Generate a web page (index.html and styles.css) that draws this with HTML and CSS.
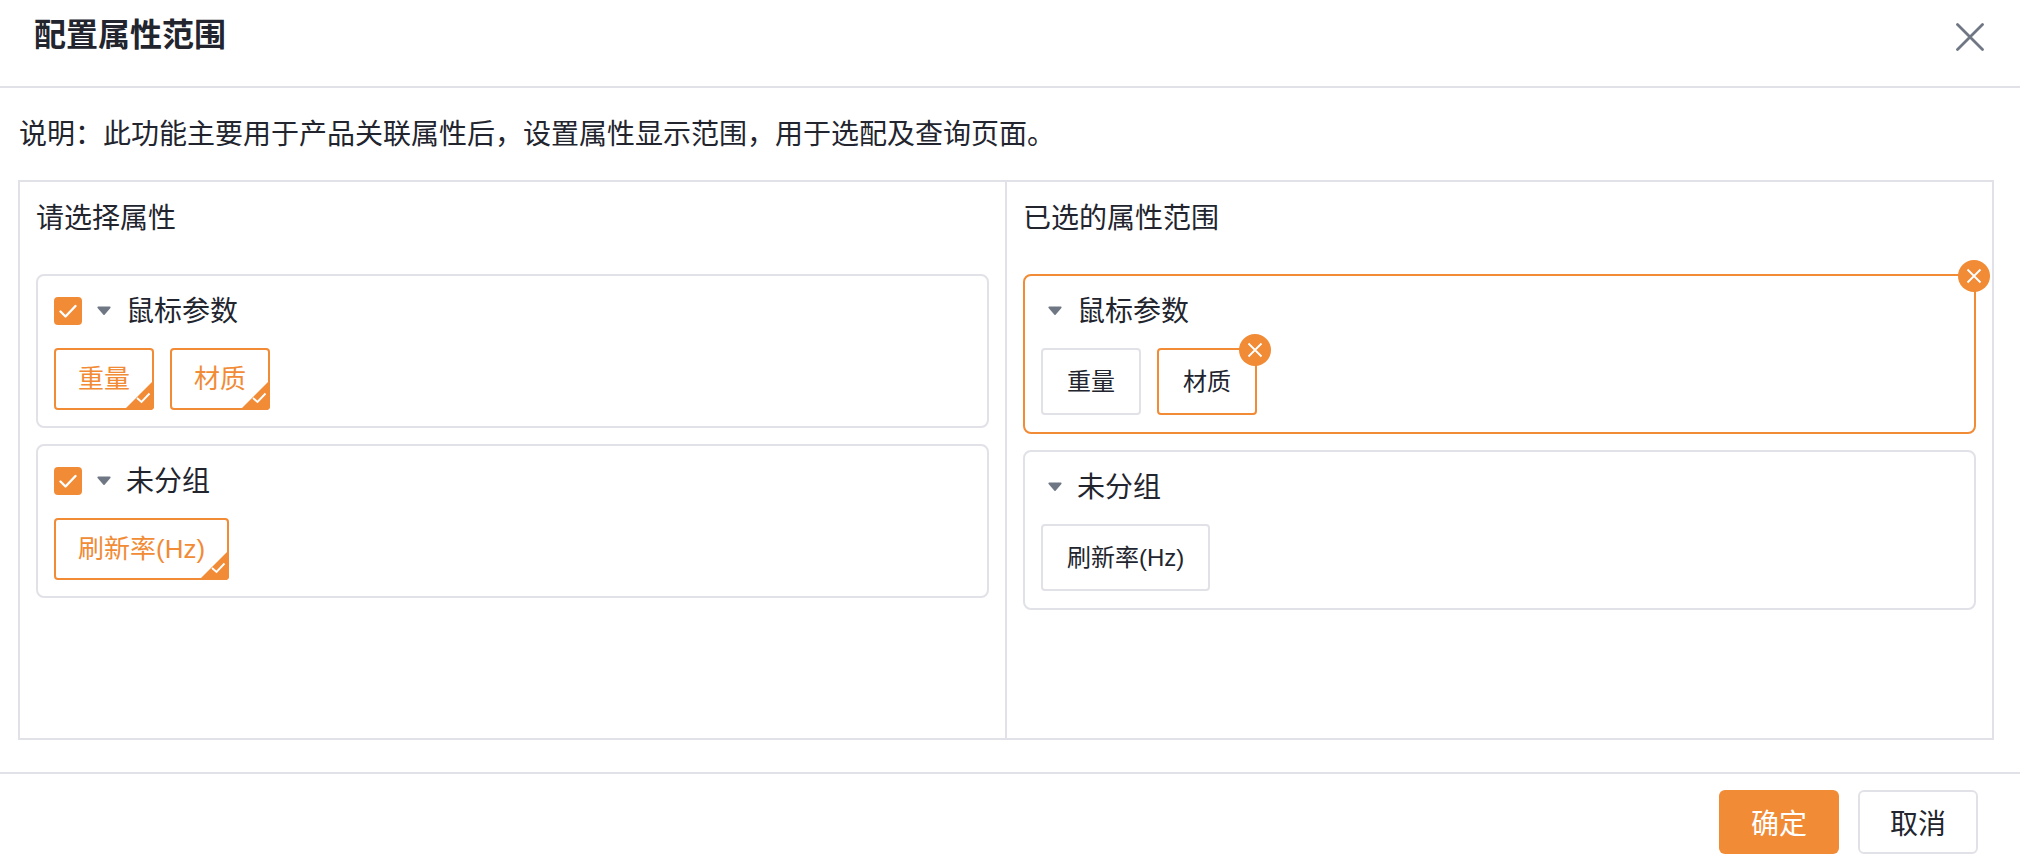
FILE: index.html
```html
<!DOCTYPE html>
<html lang="zh-CN">
<head>
<meta charset="utf-8">
<title>配置属性范围</title>
<link rel="stylesheet" href="styles.css">
</head>
<body>
<div class="dialog">
  <header class="dialog-header">
    <h1 class="dialog-title">配置属性范围</h1>
    <button class="dialog-close" type="button" aria-label="关闭">
      <svg width="28" height="28" viewBox="0 0 28 28"><path d="M1.5 1.5 26.5 26.5M26.5 1.5 1.5 26.5" fill="none" stroke="#6f7784" stroke-width="2.8" stroke-linecap="round"/></svg>
    </button>
  </header>
  <main class="dialog-body">
    <p class="note">说明：此功能主要用于产品关联属性后，设置属性显示范围，用于选配及查询页面。</p>
    <div class="picker">
      <section class="pane pane-left">
        <h2 class="pane-title">请选择属性</h2>
        <div class="group">
          <div class="group-head">
            <span class="checkbox"><svg width="28" height="28" viewBox="0 0 28 28"><path d="M6.5 14.5 11.5 19.5 21.5 9" fill="none" stroke="#fff" stroke-width="2.4" stroke-linecap="round" stroke-linejoin="round"/></svg></span>
            <svg class="caret" width="14" height="10" viewBox="0 0 14 10"><path d="M1.2 1.4H12.8L7 8.2Z" fill="#6f7784" stroke="#6f7784" stroke-width="1.6" stroke-linejoin="round"/></svg>
            <span class="group-name">鼠标参数</span>
          </div>
          <div class="tags">
            <span class="tag tag-on">重量<svg class="corner" width="30" height="30" viewBox="0 0 30 30"><path d="M30 0V26a4 4 0 0 1-4 4H0Z" fill="#f18b36"/><path d="M13 18 17.5 22 25.5 13.5" fill="none" stroke="#fff" stroke-width="1.9"/></svg></span>
            <span class="tag tag-on">材质<svg class="corner" width="30" height="30" viewBox="0 0 30 30"><path d="M30 0V26a4 4 0 0 1-4 4H0Z" fill="#f18b36"/><path d="M13 18 17.5 22 25.5 13.5" fill="none" stroke="#fff" stroke-width="1.9"/></svg></span>
          </div>
        </div>
        <div class="group">
          <div class="group-head">
            <span class="checkbox"><svg width="28" height="28" viewBox="0 0 28 28"><path d="M6.5 14.5 11.5 19.5 21.5 9" fill="none" stroke="#fff" stroke-width="2.4" stroke-linecap="round" stroke-linejoin="round"/></svg></span>
            <svg class="caret" width="14" height="10" viewBox="0 0 14 10"><path d="M1.2 1.4H12.8L7 8.2Z" fill="#6f7784" stroke="#6f7784" stroke-width="1.6" stroke-linejoin="round"/></svg>
            <span class="group-name">未分组</span>
          </div>
          <div class="tags">
            <span class="tag tag-on">刷新率(Hz)<svg class="corner" width="30" height="30" viewBox="0 0 30 30"><path d="M30 0V26a4 4 0 0 1-4 4H0Z" fill="#f18b36"/><path d="M13 18 17.5 22 25.5 13.5" fill="none" stroke="#fff" stroke-width="1.9"/></svg></span>
          </div>
        </div>
      </section>
      <section class="pane pane-right">
        <h2 class="pane-title">已选的属性范围</h2>
        <div class="group group-sel group-active">
          <div class="group-head">
            <svg class="caret" width="14" height="10" viewBox="0 0 14 10"><path d="M1.2 1.4H12.8L7 8.2Z" fill="#6f7784" stroke="#6f7784" stroke-width="1.6" stroke-linejoin="round"/></svg>
            <span class="group-name">鼠标参数</span>
          </div>
          <div class="tags">
            <span class="tag tag-sel">重量</span>
            <span class="tag tag-sel tag-active">材质<span class="remove"><svg width="32" height="32" viewBox="0 0 32 32"><path d="M9.5 9.5 22.5 22.5M22.5 9.5 9.5 22.5" fill="none" stroke="#fff" stroke-width="1.8"/></svg></span></span>
          </div>
          <span class="remove remove-group"><svg width="32" height="32" viewBox="0 0 32 32"><path d="M9.5 9.5 22.5 22.5M22.5 9.5 9.5 22.5" fill="none" stroke="#fff" stroke-width="1.8"/></svg></span>
        </div>
        <div class="group group-sel">
          <div class="group-head">
            <svg class="caret" width="14" height="10" viewBox="0 0 14 10"><path d="M1.2 1.4H12.8L7 8.2Z" fill="#6f7784" stroke="#6f7784" stroke-width="1.6" stroke-linejoin="round"/></svg>
            <span class="group-name">未分组</span>
          </div>
          <div class="tags">
            <span class="tag tag-sel">刷新率(Hz)</span>
          </div>
        </div>
      </section>
    </div>
  </main>
  <footer class="dialog-footer">
    <button class="btn btn-primary" type="button">确定</button>
    <button class="btn btn-default" type="button">取消</button>
  </footer>
</div>
</body>
</html>
```
FILE: styles.css
```css
* { box-sizing: border-box; }
html, body { margin: 0; padding: 0; background: #fff; }
body {
  font-family: "Liberation Sans", "Noto Sans CJK SC", sans-serif;
  color: #22252e;
  overflow: hidden;
}
.dialog { width: 2020px; height: 866px; display: flex; flex-direction: column; }
.dialog-header {
  height: 88px;
  flex: none;
  border-bottom: 2px solid #e1e1e8;
  display: flex;
  justify-content: space-between;
  align-items: flex-start;
  padding: 13px 36px 0 34px;
}
.dialog-title { margin: 0; font-size: 32px; line-height: 44px; font-weight: 700; }
.dialog-close { border: 0; background: none; padding: 0; margin-top: 10px; width: 28px; height: 28px; display: block; }
.dialog-body { flex: 1; padding: 0 26px 0 18px; display: flex; flex-direction: column; }
.note { margin: 27px 0 1px 1px; font-size: 28px; line-height: 40px; height: 64px; }
.picker {
  width: 1976px;
  height: 560px;
  border: 2px solid #e1e1e8;
  display: flex;
}
.pane { padding: 16px 16px 0 16px; }
.pane-left { width: 987px; border-right: 2px solid #e1e1e8; }
.pane-right { flex: 1; }
.pane-title { margin: 1px 0 35px 0; font-size: 28px; line-height: 40px; font-weight: 400; }
.group {
  position: relative;
  border: 2px solid #e1e1e8;
  border-radius: 8px;
  padding: 16px;
  height: 154px;
  margin-bottom: 16px;
}
.pane-left .group { width: 953px; }
.group-sel { width: 953px; height: 160px; padding: 16px 16px 0; }
.group-sel .group-head { padding-left: 7px; }
.group-active { border-color: #f18b36; }
.group-head { display: flex; align-items: center; height: 40px; }
.checkbox { width: 28px; height: 28px; border-radius: 4px; background: #f18b36; display: block; margin: -2px 15px 0 0; }
.checkbox svg { display: block; }
.caret { display: block; margin: -2px 0 0 0; flex: none; }
.group-name { font-size: 28px; line-height: 40px; margin-left: 15px; }
.tags { display: flex; gap: 16px; margin-top: 16px; }
.tag {
  position: relative;
  display: block;
  border: 2px solid #e1e1e8;
  border-radius: 4px;
  white-space: nowrap;
}
.tag-on {
  height: 62px;
  padding: 0 22px;
  font-size: 26px;
  line-height: 58px;
  color: #f18b36;
  border-color: #f18b36;
}
.corner { position: absolute; right: -2px; bottom: -2px; display: block; }
.tag-sel { height: 67px; padding: 0 24px; font-size: 24px; line-height: 63px; }
.tag-active { border-color: #f18b36; }
.remove { position: absolute; width: 32px; height: 32px; border-radius: 50%; background: #f18b36; display: block; }
.remove svg { display: block; }
.tag-active .remove { top: -16px; right: -16px; }
.remove-group { top: -16px; right: -16px; }
.dialog-footer {
  height: 94px;
  flex: none;
  border-top: 2px solid #e1e1e8;
  display: flex;
  justify-content: flex-end;
  gap: 19px;
  padding: 16px 42px 0 0;
}
.btn {
  width: 120px;
  height: 64px;
  border-radius: 6px;
  font: inherit;
  font-size: 28px;
  padding: 0;
}
.btn-primary { background: #f18b36; border: 0; color: #fff; }
.btn-default { background: #fff; border: 2px solid #e1e1e8; color: #22252e; }
```
